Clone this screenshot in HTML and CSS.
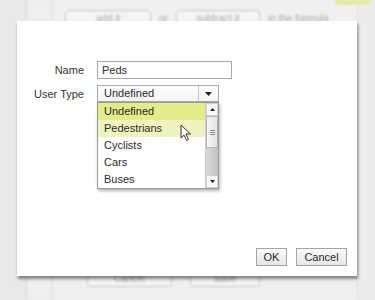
FILE: index.html
```html
<!DOCTYPE html>
<html>
<head>
<meta charset="utf-8">
<link rel="stylesheet" href="styles.css">
</head>
<body>
<div class="app">
  <div class="col-a"></div>
  <div class="col-b"></div>
  <div class="main">
    <div class="toprow">
      <span class="bgbtn w86">add it</span>
      <span class="bgtxt">or</span>
      <span class="bgbtn w84">subtract it</span>
      <span class="bgtxt">in the formula</span>
    </div>
    <div class="botrow">
      <span class="bgbtn w85">Cancel</span>
      <span class="bgbtn w70">Save</span>
    </div>
  </div>
  <div class="col-r"></div>
  <div class="greenarrow"></div>
</div>

<div class="dialog">
  <div class="form">
    <label class="lbl">Name</label>
    <div class="input">Peds</div>
    <label class="lbl">User Type</label>
    <div class="select">
      <span class="sel-val">Undefined</span>
      <span class="sel-btn"><svg width="7" height="4" viewBox="0 0 7 4"><path d="M0 0H7L3.5 4Z" fill="#222"/></svg></span>
    </div>
  </div>
  <div class="actions">
    <button class="btn ok">OK</button>
    <button class="btn cancel">Cancel</button>
  </div>
</div>

<div class="dropdown">
  <ul class="items">
    <li class="sel">Undefined</li>
    <li class="hov">Pedestrians</li>
    <li>Cyclists</li>
    <li>Cars</li>
    <li>Buses</li>
  </ul>
  <div class="sbar">
    <div class="sb-btn"><svg width="5" height="3" viewBox="0 0 5 3"><path d="M0 3H5L2.5 0Z" fill="#222"/></svg></div>
    <div class="sb-thumb"><span></span><span></span><span></span></div>
    <div class="sb-track"></div>
    <div class="sb-btn"><svg width="5" height="3" viewBox="0 0 5 3"><path d="M0 0H5L2.5 3Z" fill="#222"/></svg></div>
  </div>
</div>

<svg class="cursor" width="12" height="18" viewBox="0 0 12 18">
  <path d="M1 1V14L4 11L6.5 16.5L8.5 15.5L6 10H10.5Z" fill="#fff" stroke="#333" stroke-width="1" stroke-linejoin="round"/>
</svg>
</body>
</html>
```
FILE: styles.css
```css
* { box-sizing: border-box; }
html, body { margin: 0; padding: 0; }
body {
  width: 375px;
  height: 300px;
  overflow: hidden;
  font-family: "Liberation Sans", Arial, sans-serif;
  font-size: 11px;
  color: #2a2a2a;
  background: #eeeeee;
  position: relative;
}
.app {
  display: flex;
  height: 300px;
  filter: blur(0.9px);
  position: relative;
}
.col-a {
  width: 27px;
  background: #e9e9e9;
  border-right: 1px solid #d6d6d6;
}
.col-b {
  width: 26px;
  background: #efefef;
  border-right: 1px solid #dcdcdc;
}
.main {
  flex: 1;
  display: flex;
  flex-direction: column;
  justify-content: space-between;
  padding: 10px 0 13px 12px;
  background: #f0f0f0;
}
.toprow, .botrow {
  display: flex;
  align-items: center;
  gap: 8px;
}
.botrow { padding-left: 22px; gap: 18px; }
.bgbtn {
  height: 17px;
  border: 1px solid #c4c4c4;
  border-radius: 4px;
  background: #f4f4f4;
  color: #a8a8a8;
  font-size: 10px;
  text-align: center;
  line-height: 15px;
}
.w86 { width: 86px; }
.w84 { width: 84px; }
.w85 { width: 85px; }
.w70 { width: 70px; }
.bgtxt { color: #ababab; font-size: 10px; }
.col-r {
  width: 18px;
  background: #ececec;
  border-left: 1px solid #dedede;
}
.greenarrow {
  position: absolute;
  right: 4px;
  top: 0;
  width: 36px;
  height: 5px;
  background: #e3ec9c;
  border-radius: 0 0 6px 4px;
}

.dialog {
  position: absolute;
  left: 17px;
  top: 21px;
  width: 340px;
  height: 255px;
  background: #fff;
  box-shadow: 1px 3px 3px rgba(0,0,0,0.45);
  display: flex;
  flex-direction: column;
  justify-content: space-between;
  padding: 40px 10px 10px 0;
}
.form {
  display: grid;
  grid-template-columns: 67px 135px;
  column-gap: 13px;
  row-gap: 6px;
  align-items: center;
}
.lbl {
  text-align: right;
  color: #333;
}
.input {
  height: 18px;
  border: 1px solid #a9a9a9;
  padding-left: 4px;
  line-height: 16px;
}
.select {
  width: 122px;
  height: 17px;
  border: 1px solid #a9a9a9;
  display: flex;
  background: linear-gradient(#fff, #f4f4f4);
}
.sel-val {
  flex: 1;
  padding-left: 6px;
  line-height: 15px;
  border-right: 1px solid #c4c4c4;
}
.sel-btn {
  width: 19px;
  display: flex;
  align-items: center;
  justify-content: center;
}
.actions {
  display: flex;
  justify-content: flex-end;
  gap: 9px;
}
.btn {
  height: 18px;
  border: 1px solid #a5a5a5;
  background: linear-gradient(#fafafa, #e6e6e6);
  font-family: "Liberation Sans", Arial, sans-serif;
  font-size: 11px;
  color: #2a2a2a;
  padding: 0;
}
.ok { width: 31px; }
.cancel { width: 51px; }

.dropdown {
  position: absolute;
  left: 97px;
  top: 102px;
  width: 122px;
  height: 87px;
  border: 1px solid #9a9a9a;
  background: #fff;
  box-shadow: 1px 2px 3px rgba(0,0,0,0.3);
  display: flex;
}
.items {
  list-style: none;
  margin: 0;
  padding: 0;
  flex: 1;
}
.items li {
  height: 17px;
  line-height: 16px;
  padding-left: 6px;
  color: #2a2a2a;
}
.items li.sel { background: #e4eb8a; }
.items li.hov { background: #eff3bf; }
.sbar {
  width: 13px;
  display: flex;
  flex-direction: column;
  border-left: 1px solid #d0d0d0;
}
.sb-btn {
  height: 13px;
  display: flex;
  align-items: center;
  justify-content: center;
  background: #fafafa;
  border: 1px solid #cfcfcf;
}
.sb-thumb {
  height: 32px;
  border: 1px solid #b5b5b5;
  background: linear-gradient(90deg, #f7f7f7, #e2e2e2);
  display: flex;
  flex-direction: column;
  align-items: center;
  justify-content: center;
  gap: 1px;
}
.sb-thumb span {
  width: 5px;
  height: 1px;
  background: #888;
}
.sb-track {
  flex: 1;
  background: linear-gradient(90deg, #d8d8d8, #c2c2c2);
}
.cursor {
  position: absolute;
  left: 180px;
  top: 124px;
}
```
